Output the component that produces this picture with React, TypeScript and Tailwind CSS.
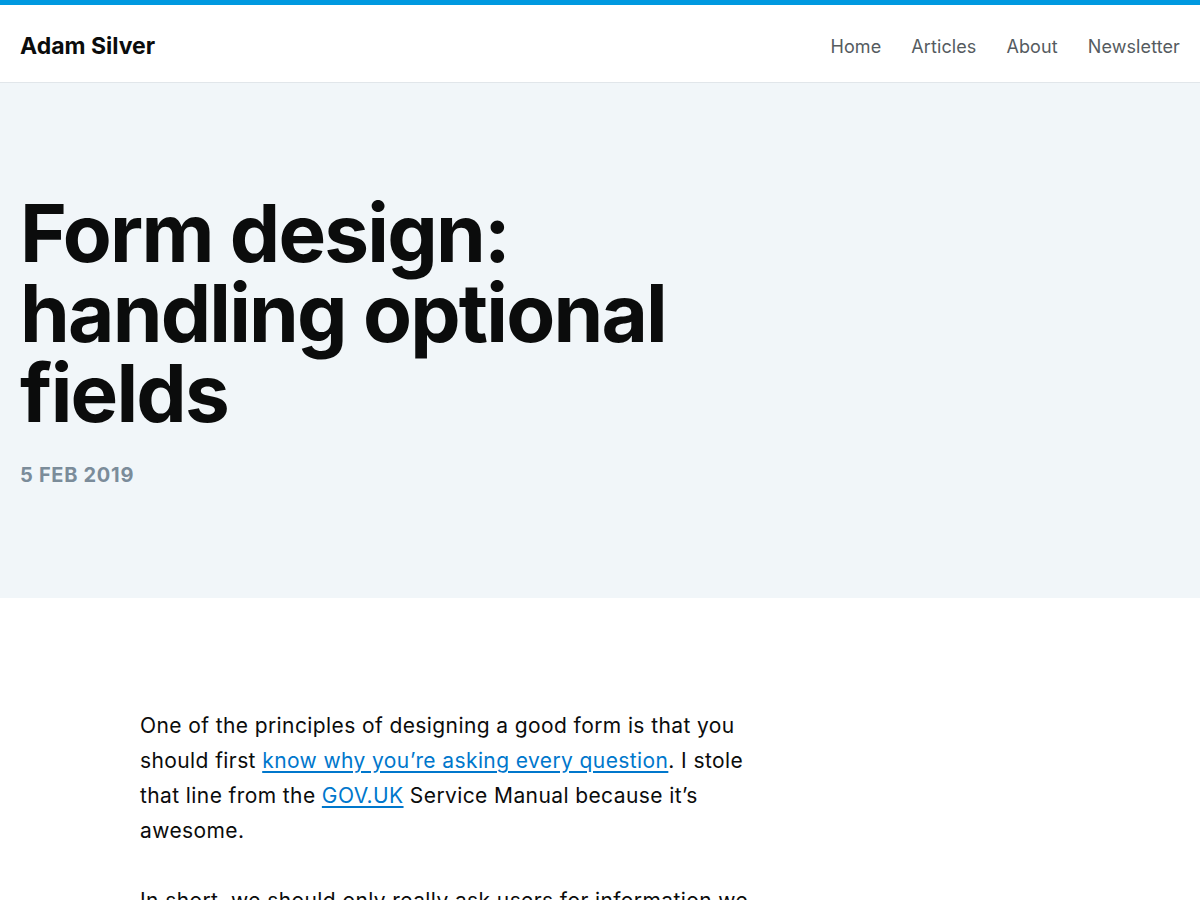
import React from "react";

const navLinks = ["Home", "Articles", "About", "Newsletter"];

const Header: React.FC = () => (
  <header className="border-t-[5px] border-[#0099e0] bg-white border-b border-b-[#e1e6ea]">
    <div className="flex h-[77px] items-center justify-between px-5 pt-[6px]">
      <a href="#" className="text-[23px] font-bold text-[#0b0c0c]">
        Adam Silver
      </a>
      <nav className="flex items-center gap-[30px]">
        {navLinks.map(link => (
          <a key={link} href="#" className="text-[18px] tracking-[0.1px] text-[#555b60]">
            {link}
          </a>
        ))}
      </nav>
    </div>
  </header>
);

const Hero: React.FC = () => (
  <section className="bg-[#f1f6f9] h-[515px] px-5 pt-[110px]">
    <h1 className="max-w-[700px] text-[80px] font-bold leading-[80px] tracking-[-1.8px] text-[#0b0c0c]">
      Form design: handling optional fields
    </h1>
    <p className="mt-[27px] text-[20px] font-bold tracking-[0.7px] text-[#7b8c9a]">
      5 FEB 2019
    </p>
  </section>
);

const Article: React.FC = () => (
  <main className="bg-white px-[140px] pt-[110px]">
    <div className="max-w-[625px] text-[21px] leading-[35px] tracking-[0.4px] text-[#0b0c0c]">
      <p>
        One of the principles of designing a good form is that you should first{" "}
        <a href="#" className="text-[#0077cc] underline underline-offset-[3px]">
          know why you’re asking every question
        </a>
        . I stole that line from the{" "}
        <a href="#" className="text-[#0077cc] underline underline-offset-[3px]">
          GOV.UK
        </a>{" "}
        Service Manual because it’s awesome.
      </p>
      <p className="mt-[35px]">
        In short, we should only really ask users for information we need. And
        that’s the main point of this article.
      </p>
    </div>
  </main>
);

export default function App() {
  return (
    <div className="min-h-[900px] bg-white font-['Inter','Liberation_Sans',sans-serif]">
      <Header />
      <Hero />
      <Article />
    </div>
  );
}
